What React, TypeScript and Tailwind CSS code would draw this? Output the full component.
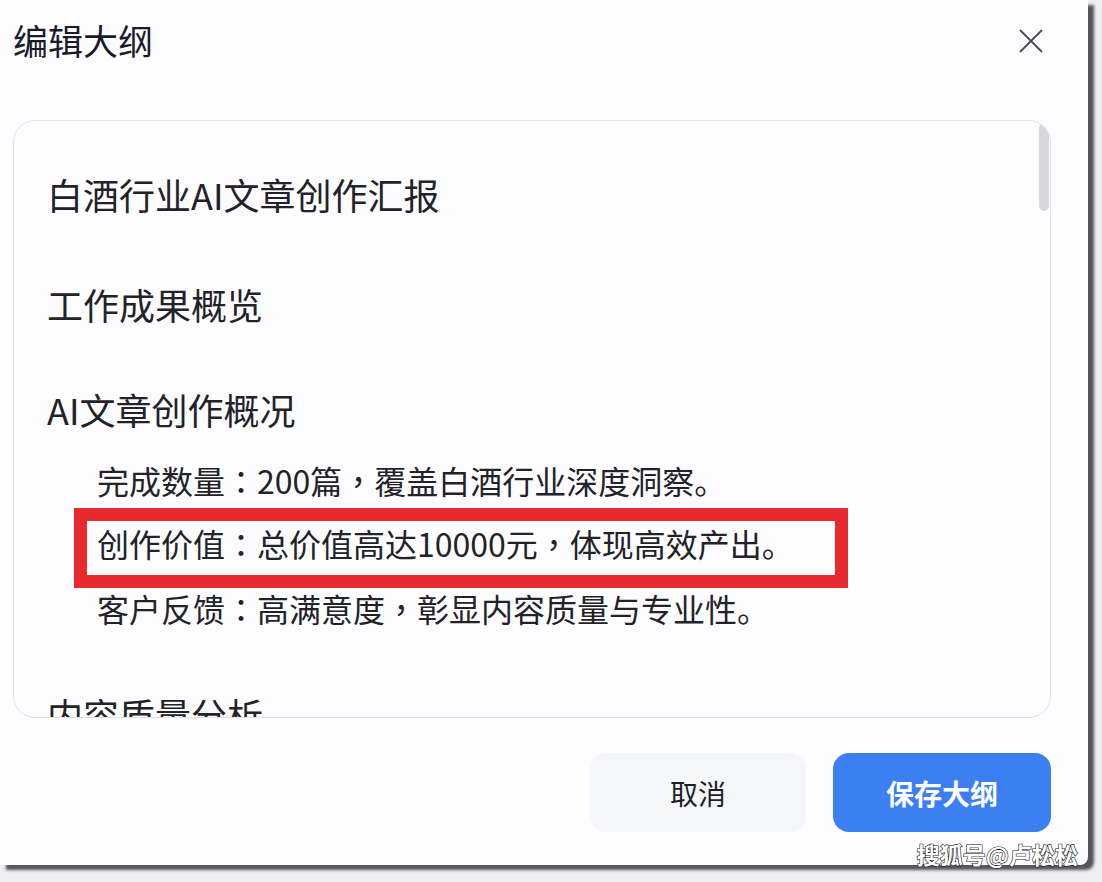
const cjk = { fontFamily: '"Noto Sans CJK SC", "Noto Sans", sans-serif' };
const tc = { fontFamily: '"Noto Sans CJK TC", sans-serif' };

function CloseIcon() {
    return (
        <svg width="26" height="26" viewBox="0 0 26 26" className="text-[#4a4a52]">
            <path d="M2 2 L24 24 M24 2 L2 24" stroke="currentColor" strokeWidth="1.8" fill="none" />
        </svg>
    );
}

// full-width colon / comma sit centred in the reference, as in the TC cut
function Line({ parts }: { parts: string[] }) {
    return (
        <>
            {parts.map((p, i) =>
                p === "：" || p === "，" ? (
                    <span key={i} style={tc}>{p}</span>
                ) : (
                    <span key={i}>{p}</span>
                )
            )}
        </>
    );
}

export default function App() {
    return (
        <div className="w-[1102px] h-[882px] bg-[#efeff1] overflow-hidden" style={cjk}>
            <div className="relative w-[1088px] h-[865px] bg-[#fdfdff] rounded-br-[8px] shadow-[6px_5px_3px_#55555d] flex flex-col">
                {/* header */}
                <div className="flex items-start justify-between pl-[13px] pr-[44px] pt-[16px] h-[120px]">
                    <h1 className="text-[35px] leading-[48px] text-[#1b1a2a] font-normal">编辑大纲</h1>
                    <div className="mt-[12px]">
                        <CloseIcon />
                    </div>
                </div>

                {/* outline box */}
                <div className="relative ml-[13px] w-[1038px] h-[598px] border border-[#dde1e6] rounded-[22px] overflow-hidden bg-[#fdfdff]">
                    <div className="absolute right-[1px] top-[2px] w-[10px] h-[88px] rounded-full bg-[#d6d8dc]" />
                    <div className="flex flex-col pl-[33px] pt-[49px] text-[#222228]">
                        <p className="text-[36px] leading-[49px]">白酒行业AI文章创作汇报</p>
                        <p className="text-[36px] leading-[49px] mt-[61px]">工作成果概览</p>
                        <p className="text-[36px] leading-[49px] mt-[56px]">AI文章创作概况</p>
                        <div className="pl-[50px] flex flex-col">
                            <p className="text-[32px] leading-[44px] mt-[24px]">
                                <Line parts={["完成数量", "：", "200篇", "，", "覆盖白酒行业深度洞察。"]} />
                            </p>
                            <div className="relative mt-[19px]">
                                <div className="absolute -left-[23px] -top-[13px] w-[774px] h-[80px] border-[13px] border-[#e62a2e]" />
                                <p className="text-[32px] leading-[44px]">
                                    <Line parts={["创作价值", "：", "总价值高达10000元", "，", "体现高效产出。"]} />
                                </p>
                            </div>
                            <p className="text-[32px] leading-[44px] mt-[21px]">
                                <Line parts={["客户反馈", "：", "高满意度", "，", "彰显内容质量与专业性。"]} />
                            </p>
                        </div>
                        <p className="text-[36px] leading-[49px] mt-[60px]">内容质量分析</p>
                    </div>
                </div>

                {/* footer */}
                <div className="flex justify-end gap-[27px] pr-[37px] mt-[35px]">
                    <button className="w-[216px] h-[79px] rounded-[16px] bg-[#f5f6f8] text-[28px] text-[#1e1e26]">取消</button>
                    <button className="w-[218px] h-[79px] rounded-[16px] bg-[#3b7ff0] text-[28px] font-bold text-white">保存大纲</button>
                </div>

                {/* watermark */}
                <div className="absolute right-[10px] bottom-[-6px] text-[23px] font-bold text-white [-webkit-text-stroke:1.2px_#111] [paint-order:stroke_fill]">
                    搜狐号@卢松松
                </div>
            </div>
        </div>
    );
}
